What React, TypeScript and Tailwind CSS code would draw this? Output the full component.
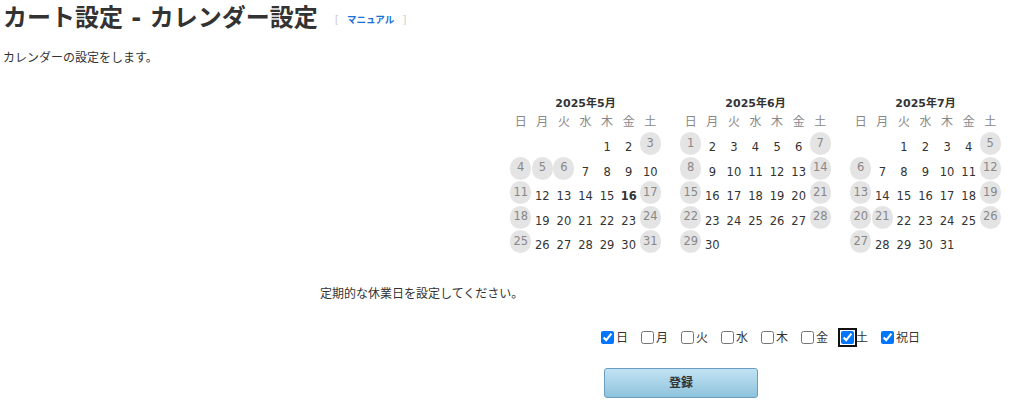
import React from "react";

type Month = {
  label: string;
  start: number;
  days: number;
  off: number[];
  today?: number;
};

const months: Month[] = [
  { label: "2025年5月", start: 4, days: 31, off: [3, 4, 5, 6, 11, 17, 18, 24, 25, 31], today: 16 },
  { label: "2025年6月", start: 0, days: 30, off: [1, 7, 8, 14, 15, 21, 22, 28, 29] },
  { label: "2025年7月", start: 2, days: 31, off: [5, 6, 12, 13, 19, 20, 21, 26, 27] },
];

const week = ["日", "月", "火", "水", "木", "金", "土"];

const font = "font-['DejaVu_Sans','Noto_Sans_CJK_JP',sans-serif]";

const Calendar = ({ m }: { m: Month }) => {
  const cells: (number | null)[] = [];
  for (let i = 0; i < m.start; i++) cells.push(null);
  for (let d = 1; d <= m.days; d++) cells.push(d);

  return (
    <div className="w-[151px]">
      <div className="h-[17px] text-center text-[11px] font-bold leading-[17px] text-[#333]">
        {m.label}
      </div>
      <div className="grid h-[20px] grid-cols-7 items-center text-center text-[12px] text-[#888]">
        {week.map((w) => (
          <span key={w}>{w}</span>
        ))}
      </div>
      <div className="grid grid-cols-7">
        {cells.map((d, i) => (
          <div key={i} className="flex h-[24.5px] items-start justify-center">
            {d === null ? null : m.off.includes(d) ? (
              <span className="flex h-[23px] w-[21px] items-center justify-center rounded-full bg-[#e4e4e4] text-[11.5px] text-[#888]">
                {d}
              </span>
            ) : (
              <span
                className={
                  "pt-[8px] text-[11.5px] leading-[14px] text-[#333] " +
                  (d === m.today ? "font-bold" : "")
                }
              >
                {d}
              </span>
            )}
          </div>
        ))}
      </div>
    </div>
  );
};

const days = [
  { label: "日", checked: true },
  { label: "月", checked: false },
  { label: "火", checked: false },
  { label: "水", checked: false },
  { label: "木", checked: false },
  { label: "金", checked: false },
  { label: "土", checked: true, focus: true },
  { label: "祝日", checked: true },
];

export default function App() {
  return (
    <div className={"h-[409px] w-[1024px] overflow-hidden bg-white text-[#333] " + font}>
      <div className="flex h-[36px] items-center pl-[3px]">
        <h1 className="text-[24px] font-bold leading-[28px] text-[#333]">
          カート設定 - カレンダー設定
        </h1>
        <span className="ml-[17px] mt-[5px] flex items-center text-[11px] text-[#d0d0d0]">
          [
          <a className="mx-[8px] text-[9.5px] font-bold text-[#1a6fd8]">マニュアル</a>]
        </span>
      </div>

      <p className="mt-[14px] pl-[3px] text-[12px] leading-[16px]">
        カレンダーの設定をします。
      </p>

      <div className="ml-[510px] mt-[29px] flex gap-[19px]">
        {months.map((m) => (
          <Calendar key={m.label} m={m} />
        ))}
      </div>

      <p className="ml-[320px] mt-[31px] text-[12px] leading-[16px]">
        定期的な休業日を設定してください。
      </p>

      <div className="ml-[601px] mt-[26px] flex h-[20px] items-center gap-[13px]">
        {days.map((d) => (
          <label key={d.label} className="flex items-center gap-[2px] text-[12px]">
            <input
              type="checkbox"
              defaultChecked={d.checked}
              className={
                "h-[13px] w-[13px] accent-[#0075ff] " +
                (d.focus ? "rounded-[2px] outline-2 outline-offset-1 outline-[#111]" : "")
              }
            />
            <span>{d.label}</span>
          </label>
        ))}
      </div>

      <button className="ml-[604px] mt-[20px] h-[30px] w-[154px] rounded-[3px] border border-[#6a9ec1] bg-gradient-to-b from-[#c2e2f3] to-[#8ec3dc] text-[12px] font-bold text-[#333]">
        登録
      </button>
    </div>
  );
}
